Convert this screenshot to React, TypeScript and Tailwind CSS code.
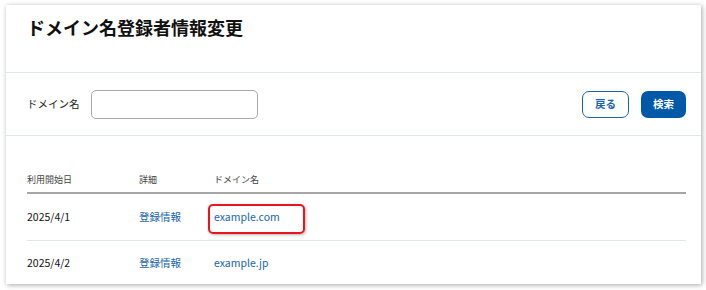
export default function App() {
  return (
    <div
      className="w-[706px] h-[290px] bg-white pt-[5px] pl-[6px]"
      style={{ fontFamily: '"Noto Sans CJK JP", "Noto Sans", sans-serif' }}
    >
      <div className="w-[695px] h-[279px] bg-white shadow-[1px_1px_5px_rgba(0,0,0,0.35)] flex flex-col">
        {/* Title */}
        <div className="h-[68px] shrink-0 border-b border-[#dfe7ef] px-[21px] pt-[9px]">
          <h1 className="text-[18px] font-bold text-[#111] leading-[26px]">ドメイン名登録者情報変更</h1>
        </div>

        {/* Search */}
        <div className="h-[63px] shrink-0 border-b border-[#dfe7ef] flex items-center pl-[21px] pr-[15px]">
          <span className="text-[10.5px] text-[#222] w-[64px]">ドメイン名</span>
          <input className="w-[167px] h-[29px] border border-[#a9a9a9] rounded-[5px] outline-none" />
          <div className="ml-auto flex gap-[12px]">
            <button className="w-[47px] h-[27px] border border-[#1a62aa] rounded-[7px] text-[10.5px] font-bold text-[#1a62aa] bg-white">
              戻る
            </button>
            <button className="w-[45px] h-[27px] rounded-[7px] text-[10.5px] font-bold text-white bg-[#0059a8]">
              検索
            </button>
          </div>
        </div>

        {/* Table */}
        <div className="pl-[21px] pr-[15px] pt-[32px]">
          <div className="flex items-center h-[26px] border-b-[2px] border-[#a6a6a6] text-[9px] text-[#444]">
            <span className="w-[112px]">利用開始日</span>
            <span className="w-[75px]">詳細</span>
            <span>ドメイン名</span>
          </div>
          <div className="flex items-center h-[47px] border-b border-[#dfe7ef] text-[10.5px]">
            <span className="w-[112px] text-[#111]">2025/4/1</span>
            <span className="w-[75px] text-[#2065aa]">登録情報</span>
            <span className="relative text-[#2065aa]">
              example.com
              <span className="absolute left-[-6px] top-[-5px] w-[97px] h-[30px] border-[2px] border-[#e8151b] rounded-[5px] shadow-[1px_1px_3px_rgba(0,0,0,0.3)]" />
            </span>
          </div>
          <div className="flex items-center h-[44px] text-[10.5px]">
            <span className="w-[112px] text-[#111]">2025/4/2</span>
            <span className="w-[75px] text-[#2065aa]">登録情報</span>
            <span className="text-[#2065aa]">example.jp</span>
          </div>
        </div>
      </div>
    </div>
  );
}
